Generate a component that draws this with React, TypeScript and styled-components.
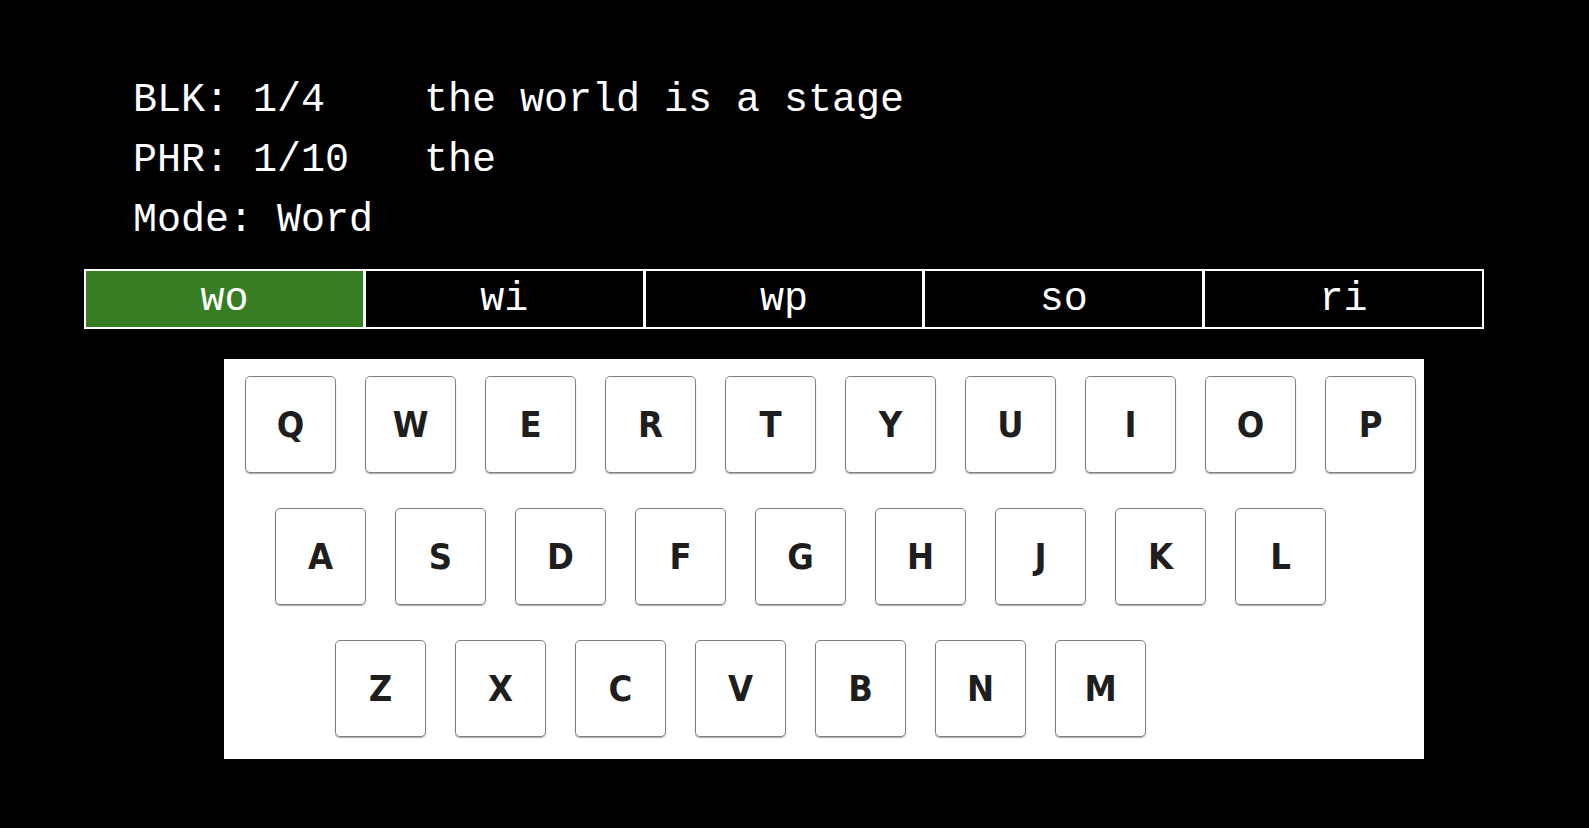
import styled, { createGlobalStyle } from "styled-components";

const GlobalStyle = createGlobalStyle`
  html, body {
    margin: 0;
    padding: 0;
    background: #000;
  }
  body {
    width: 1589px;
    height: 828px;
    overflow: hidden;
  }
`;

const info = [
  ["BLK: 1/4", "the world is a stage"],
  ["PHR: 1/10", "the"],
  ["Mode: Word", ""],
];

const choices = ["wo", "wi", "wp", "so", "ri"];

const rows = [
  { keys: "QWERTYUIOP", indent: 21 },
  { keys: "ASDFGHJKL", indent: 51 },
  { keys: "ZXCVBNM", indent: 111 },
];

function App() {
  return (
    <Page>
      <GlobalStyle />
      <Info>
        {info.map(([label, value]) => (
          <InfoRow key={label}>
            <span>{label}</span>
            <span>{value}</span>
          </InfoRow>
        ))}
      </Info>
      <ChoiceBar>
        {choices.map((c, i) => (
          <Choice key={c} $active={i === 0}>
            {c}
          </Choice>
        ))}
      </ChoiceBar>
      <Keyboard>
        {rows.map((row) => (
          <KeyRow key={row.keys} $indent={row.indent}>
            {row.keys.split("").map((k) => (
              <Key key={k}>{k}</Key>
            ))}
          </KeyRow>
        ))}
      </Keyboard>
    </Page>
  );
}

export default App;

const Page = styled.div`
  display: flex;
  flex-direction: column;
  padding-top: 71px;
  padding-left: 84px;
  font-family: "Liberation Mono", "Courier New", monospace;
  color: #fff;
`;

const Info = styled.div`
  display: flex;
  flex-direction: column;
  padding-left: 49px;
`;

const InfoRow = styled.div`
  display: grid;
  grid-template-columns: 291px auto;
  font-size: 40px;
  line-height: 60px;
  white-space: pre;
`;

const ChoiceBar = styled.div`
  display: flex;
  width: 1400px;
  margin-top: 18px;
`;

const Choice = styled.div<{ $active?: boolean }>`
  flex: 1;
  height: 56px;
  display: flex;
  align-items: center;
  justify-content: center;
  border: 2px solid #fff;
  margin-left: -1px;
  background: ${(p) => (p.$active ? "#377e22" : "#000")};
  color: #fff;
  font-size: 40px;
  &:first-child {
    margin-left: 0;
  }
`;

const Keyboard = styled.div`
  display: flex;
  flex-direction: column;
  gap: 35px;
  width: 1200px;
  height: 400px;
  box-sizing: border-box;
  margin-top: 30px;
  margin-left: 140px;
  padding-top: 17px;
  background: #fff;
`;

const KeyRow = styled.div<{ $indent: number }>`
  display: flex;
  gap: 29px;
  padding-left: ${(p) => p.$indent}px;
`;

const Key = styled.div`
  width: 89px;
  height: 95px;
  display: flex;
  align-items: center;
  justify-content: center;
  border: 1px solid #808080;
  border-radius: 5px;
  box-shadow: 0 1px 1px rgba(0, 0, 0, 0.35);
  font-family: "DejaVu Sans Condensed", "DejaVu Sans", sans-serif;
  font-weight: bold;
  font-size: 36px;
  color: #1e1e1e;
`;
